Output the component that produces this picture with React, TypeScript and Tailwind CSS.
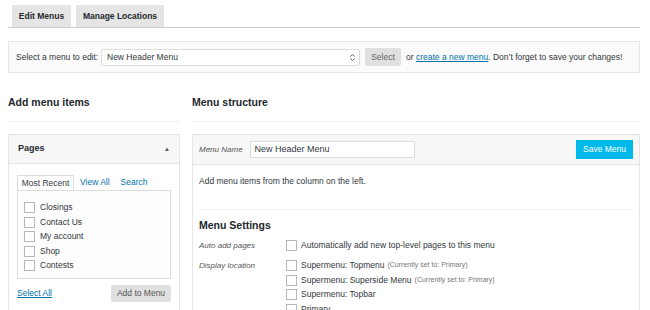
import { ChevronsUpDown } from "lucide-react";

const pages = ["Closings", "Contact Us", "My account", "Shop", "Contests"];

const locations = [
  { name: "Supermenu: Topmenu", note: "(Currently set to: Primary)" },
  { name: "Supermenu: Superside Menu", note: "(Currently set to: Primary)" },
  { name: "Supermenu: Topbar", note: "" },
  { name: "Primary", note: "" },
];

function Box() {
  return <span className="inline-block w-[11px] h-[11px] border border-[#b4b9be] bg-white shrink-0" />;
}

export default function App() {
  return (
    <div
      className="w-[650px] h-[310px] overflow-hidden bg-white text-[#32373c] text-[8.5px] whitespace-nowrap"
      style={{ fontFamily: '"Liberation Sans", Arial, sans-serif' }}
    >
      <div className="pl-[8px] w-[640px]">
        {/* Tabs */}
        <div className="flex gap-[5px] pl-[4px] pt-[5px] border-b border-[#ccc]">
          <div className="h-[22px] w-[59px] flex items-center justify-center bg-[#e5e5e5] font-bold text-[8.5px] text-[#23282d]">
            Edit Menus
          </div>
          <div className="h-[22px] w-[88px] flex items-center justify-center bg-[#e5e5e5] font-bold text-[8.5px] text-[#23282d]">
            Manage Locations
          </div>
        </div>

        {/* Select menu bar */}
        <div className="mt-[13px] h-[32px] flex items-center bg-[#fbfbfb] border border-[#e5e5e5] pl-[7px]">
          <span className="w-[85px] shrink-0">Select a menu to edit:</span>
          <div className="w-[259px] shrink-0 h-[17px] flex items-center justify-between bg-white border border-[#ddd] rounded-[2px] pl-[5px] pr-[2px] text-[#32373c]">
            <span>New Header Menu</span>
            <ChevronsUpDown size={9} strokeWidth={2.5} className="text-[#555]" />
          </div>
          <div className="ml-[5px] w-[36px] shrink-0 h-[18px] flex items-center justify-center bg-[#e0e0e0] text-[#666] rounded-[2px]">
            Select
          </div>
          <span className="ml-[5px]">
            or{" "}
            <span className="text-[#0073aa] underline">create a new menu</span>. Don’t forget to save your changes!
          </span>
        </div>

        <div className="flex gap-[12px] mt-[20px]">
          {/* Left column */}
          <div className="w-[172px] shrink-0">
            <h2 className="h-[20px] flex items-center font-bold text-[10.5px] text-[#23282d]">Add menu items</h2>
            <div className="mt-[8px] border-t border-[#eee]" />
            <div className="mt-[12px] border border-[#e5e5e5] h-[200px]">
              <div className="h-[29px] bg-[#f7f7f7] border-b border-[#e5e5e5] flex items-center justify-between px-[9px]">
                <span className="font-bold text-[9px] text-[#23282d]">Pages</span>
                <span className="text-[6px] text-[#555]">▲</span>
              </div>
              <div className="px-[8px] pt-[11px]">
                <div className="flex items-end">
                  <div className="h-[15px] w-[57px] flex items-center justify-center bg-white border border-[#ddd] border-b-0 text-[#32373c]">
                    Most Recent
                  </div>
                  <div className="h-[15px] px-[6px] flex items-center text-[#0073aa]">View All</div>
                  <div className="h-[15px] px-[5px] flex items-center text-[#0073aa]">Search</div>
                </div>
                <div className="h-[89px] border border-[#ddd] bg-[#fdfdfd] pt-[11px] pl-[6px] flex flex-col gap-[3.5px]">
                  {pages.map((p) => (
                    <div key={p} className="flex items-center gap-[5px] h-[11px]">
                      <Box />
                      <span>{p}</span>
                    </div>
                  ))}
                </div>
                <div className="mt-[6px] flex items-center justify-between">
                  <span className="text-[#0073aa] underline">Select All</span>
                  <div className="w-[60px] h-[17px] flex items-center justify-center bg-[#e0e0e0] text-[#555] rounded-[2px]">
                    Add to Menu
                  </div>
                </div>
              </div>
            </div>
          </div>

          {/* Right column */}
          <div className="flex-1">
            <h2 className="h-[20px] flex items-center font-bold text-[10.5px] text-[#23282d]">Menu structure</h2>
            <div className="mt-[8px] border-t border-[#eee]" />
            <div className="mt-[12px] border border-[#e5e5e5] h-[200px]">
              <div className="h-[30px] bg-[#f7f7f7] border-b border-[#e5e5e5] flex items-center justify-between pl-[6px] pr-[6px]">
                <div className="flex items-center">
                  <span className="italic text-[8px] text-[#555]">Menu Name</span>
                  <div className="ml-[7px] w-[165px] h-[17px] flex items-center bg-white border border-[#ddd] pl-[4px] text-[9px]">
                    New Header Menu
                  </div>
                </div>
                <div className="w-[57px] h-[19px] flex items-center justify-center bg-[#00b9eb] text-white">
                  Save Menu
                </div>
              </div>
              <div className="px-[6px]">
                <p className="mt-[10px]">Add menu items from the column on the left.</p>
                <div className="mt-[21px] border-t border-[#eee]" />
                <h3 className="mt-[8px] font-bold text-[10.5px] text-[#23282d]">Menu Settings</h3>
                <div className="mt-[5px] flex items-center h-[14px]">
                  <span className="w-[87px] italic text-[8px] text-[#555]">Auto add pages</span>
                  <Box />
                  <span className="ml-[4px]">Automatically add new top-level pages to this menu</span>
                </div>
                <div className="mt-[6px] flex">
                  <span className="w-[87px] h-[14px] flex items-center italic text-[8px] text-[#555]">Display location</span>
                  <div className="flex flex-col gap-[0.5px]">
                    {locations.map((l) => (
                      <div key={l.name} className="flex items-center h-[14px]">
                        <Box />
                        <span className="ml-[4px]">{l.name}</span>
                        {l.note && <span className="ml-[3px] text-[7px] text-[#777]">{l.note}</span>}
                      </div>
                    ))}
                  </div>
                </div>
              </div>
            </div>
          </div>
        </div>
      </div>
    </div>
  );
}
